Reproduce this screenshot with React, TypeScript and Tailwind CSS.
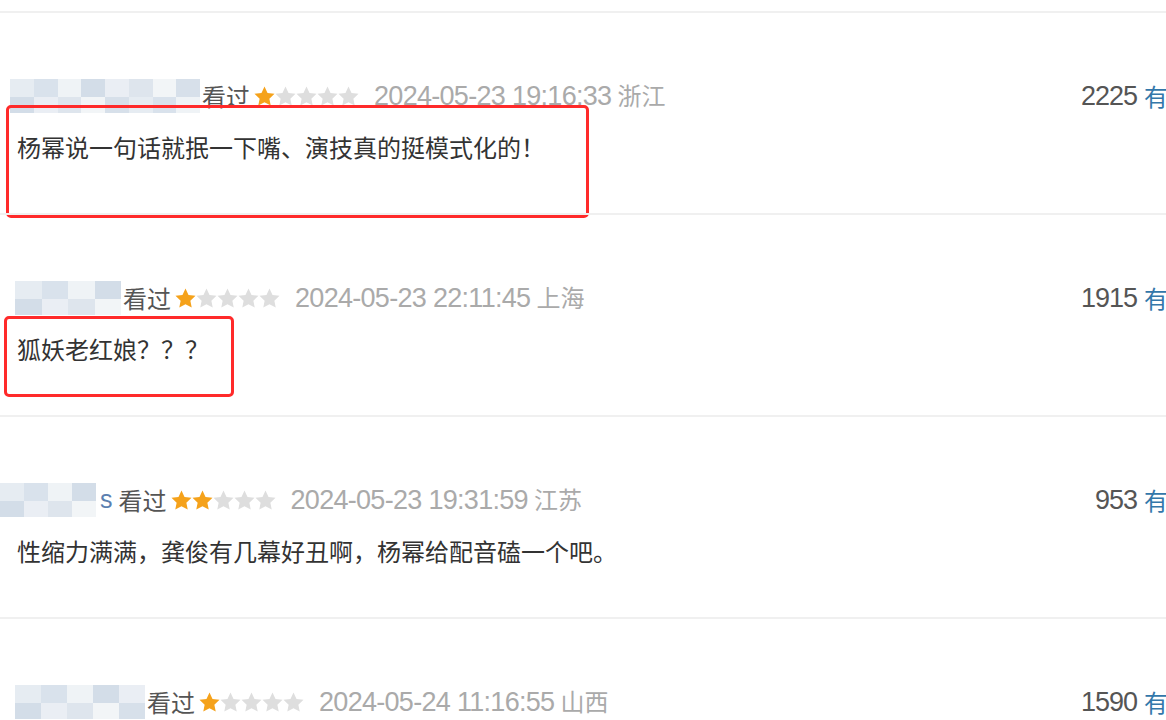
import React from 'react'

// ── data ──────────────────────────────────────────────────────────────────────

type Review = {
  mosaic: { left: number; width: number; suffix?: string }
  stars: number
  time: string
  votes: string
  content?: string
  box?: { left: number; top: number; width: number; height: number }
}

const REVIEWS: Review[] = [
  {
    mosaic: { left: 10, width: 190 },
    stars: 1,
    time: '2024-05-23 19:16:33 浙江',
    votes: '2225',
    content: '杨幂说一句话就抿一下嘴、演技真的挺模式化的！',
    box: { left: 6, top: 92, width: 583, height: 113 },
  },
  {
    mosaic: { left: 15, width: 106 },
    stars: 1,
    time: '2024-05-23 22:11:45 上海',
    votes: '1915',
    content: '狐妖老红娘？？？',
    box: { left: 4, top: 101, width: 230, height: 81 },
  },
  {
    mosaic: { left: 0, width: 96, suffix: 's' },
    stars: 2,
    time: '2024-05-23 19:31:59 江苏',
    votes: '953',
    content: '性缩力满满，龚俊有几幕好丑啊，杨幂给配音磕一个吧。',
  },
  {
    mosaic: { left: 15, width: 130 },
    stars: 1,
    time: '2024-05-24 11:16:55 山西',
    votes: '1590',
  },
]

const CJK = "font-['Microsoft_YaHei','Noto_Sans_CJK_SC',sans-serif]"
const NUM = "font-['Liberation_Sans','Noto_Sans_CJK_SC',sans-serif]"

// ── pieces ────────────────────────────────────────────────────────────────────

function Star({ on }: { on: boolean }) {
  return (
    <svg width="21" height="20" viewBox="1.2 1.4 21.6 20.4" className="shrink-0">
      <path
        d="M12 1.8l3.1 6.6 7.2.9-5.3 5 1.4 7.1L12 17.9l-6.4 3.5 1.4-7.1-5.3-5 7.2-.9z"
        fill={on ? '#f5a21b' : '#dedede'}
      />
    </svg>
  )
}

function Mosaic({ width }: { width: number }) {
  // pixelated username blur
  const cells = ['#e4eaf1', '#d5dfea', '#eef2f6', '#cfdae6', '#e8edf3', '#dbe3ec', '#f1f4f7', '#d3dde8']
  const n = Math.max(3, Math.round(width / 24))
  return (
    <div className="flex flex-col shrink-0 opacity-90" style={{ width }}>
      <div className="flex h-[18px]">
        {Array.from({ length: n }).map((_, i) => (
          <div key={i} className="flex-1" style={{ background: cells[i % cells.length] }} />
        ))}
      </div>
      <div className="flex h-[16px]">
        {Array.from({ length: n }).map((_, i) => (
          <div key={i} className="flex-1" style={{ background: cells[(i + 3) % cells.length] }} />
        ))}
      </div>
    </div>
  )
}

function ReviewRow({ r }: { r: Review }) {
  return (
    <div className="relative h-[202px] border-t-2 border-[#f0f0f0]">
      <div className="flex items-center h-[26px] mt-[70px]">
        <div style={{ marginLeft: r.mosaic.left }} className="flex items-center">
          <Mosaic width={r.mosaic.width} />
          {r.mosaic.suffix && (
            <span className={`${NUM} text-[25px] text-[#5b7fb0] ml-[4px] mr-[4px]`}>{r.mosaic.suffix}</span>
          )}
        </div>
        <span className={`${CJK} text-[24px] leading-[26px] text-[#555] ml-[2px]`}>看过</span>
        <div className="flex ml-[4px]">
          {[0, 1, 2, 3, 4].map((i) => (
            <Star key={i} on={i < r.stars} />
          ))}
        </div>
        <span className={`${NUM} text-[27px] tracking-[-0.7px] text-[#aaa] ml-[15px] whitespace-nowrap`}>
          {r.time.slice(0, 19)}
          <span className={`${CJK} text-[24px] tracking-normal ml-[6px]`}>{r.time.slice(20)}</span>
        </span>
        <div className="flex-1" />
        <span className="whitespace-nowrap mr-[-26px] flex items-center">
          <span className={`${NUM} text-[27px] tracking-[-1px] text-[#555]`}>{r.votes}</span>
          <span className={`${CJK} text-[24px] text-[#3377aa] ml-[7px]`}>有用</span>
        </span>
      </div>
      {r.content && (
        <p className={`${CJK} text-[24px] leading-[26px] text-[#333] ml-[17px] mt-[25px]`}>{r.content}</p>
      )}
      {r.box && (
        <div
          className="absolute border-[3px] border-[#ff2a2a] rounded-[5px] pointer-events-none"
          style={{ left: r.box.left, top: r.box.top, width: r.box.width, height: r.box.height }}
        />
      )}
    </div>
  )
}

// ── page ──────────────────────────────────────────────────────────────────────

export default function App() {
  return (
    <div className="w-[1166px] h-[720px] overflow-hidden bg-white">
      <div className="pt-[11px]">
        {REVIEWS.map((r, i) => (
          <ReviewRow key={i} r={r} />
        ))}
      </div>
    </div>
  )
}
